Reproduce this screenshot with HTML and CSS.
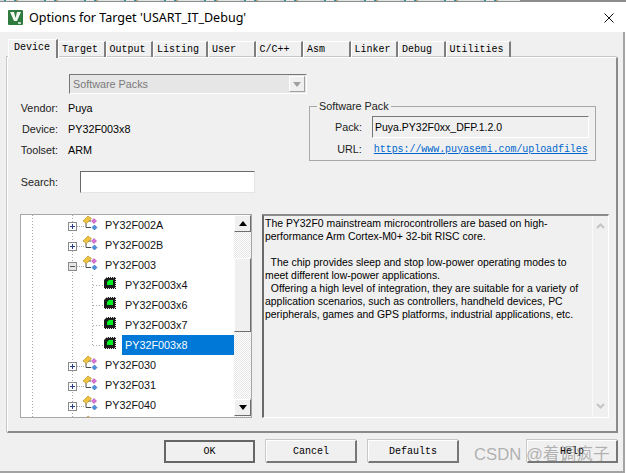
FILE: index.html
```html
<!DOCTYPE html>
<html>
<head>
    <meta charset="utf-8">
    <link rel="stylesheet" href="styles.css">
</head>
<body>
    <svg class="defs" width="0" height="0">
        <symbol id="group" viewBox="0 0 32 20">
            <path d="M18 8V12.500H23M20 6H23" fill="none" stroke="#4a4a4a"/>
            <path d="M15 6L20 1L23.500 3.500L18.500 8.500Z" fill="#efc240" stroke="#b08a20" stroke-width=".6"/>
            <path d="M26 3.500L28.500 6L26 8.500L23.500 6Z" fill="#e070d8" stroke="#a04aa0" stroke-width=".6"/>
            <path d="M26.500 10L29 12.500L26.500 15L24 12.500Z" fill="#4f94e0" stroke="#2a62a8" stroke-width=".6"/>
        </symbol>
        <symbol id="chip" viewBox="0 0 30 20">
            <path d="M15 2H24V14H12V5Z" fill="#1c1c1c"/>
            <path d="M15 2.500H24M23.500 2V14M12 13.500H24" fill="none" stroke="#e8e8e8" stroke-dasharray="1 1"/>
            <path d="M17 5H21V10H15V7Z" fill="#00ee22"/>
        </symbol>
    </svg>

    <div class="window">
        <div class="top-edge"><div class="noise"></div></div>

        <div class="titlebar">
            <svg class="app-icon" width="15" height="15" viewBox="0 0 15 15">
                <rect width="15" height="15" rx="1" fill="#2f7a3f"/>
                <path d="M2 2H6L7.500 8L9 2H13L9 11H6Z" fill="#f2f6f0"/>
                <path d="M10 13H13" stroke="#fff" stroke-width="1.400"/>
            </svg>
            <span class="title">Options for Target 'USART_IT_Debug'</span>
            <svg class="close" width="10" height="10" viewBox="0 0 10 10">
                <path d="M.5 .5L9.500 9.500M9.500 .5L.5 9.500" stroke="#111" stroke-width="1"/>
            </svg>
        </div>

        <div class="body">
            <div class="tabs">
                <span class="tab active">Device</span>
                <span class="tab">Target</span>
                <span class="tab">Output</span>
                <span class="tab wide">Listing</span>
                <span class="tab">User</span>
                <span class="tab">C/C++</span>
                <span class="tab">Asm</span>
                <span class="tab">Linker</span>
                <span class="tab">Debug</span>
                <span class="tab">Utilities</span>
            </div>

            <div class="panel">
                <div class="combo">
                    <span>Software Packs</span>
                    <span class="combo-btn"><i class="arrow-down grey"></i></span>
                </div>

                <div class="info-row">
                    <div class="info-col">
                        <div class="field"><label>Vendor:</label><span>Puya</span></div>
                        <div class="field"><label>Device:</label><span>PY32F003x8</span></div>
                        <div class="field"><label>Toolset:</label><span>ARM</span></div>
                        <div class="search"><label>Search:</label><div class="search-box"></div></div>
                    </div>

                    <fieldset class="pack">
                        <legend>Software Pack</legend>
                        <div class="pack-row">
                            <label>Pack:</label>
                            <div class="pack-value">Puya.PY32F0xx_DFP.1.2.0</div>
                        </div>
                        <div class="pack-row">
                            <label>URL:</label>
                            <a class="pack-link" href="#">https://www.puyasemi.com/uploadfiles</a>
                        </div>
                    </fieldset>
                </div>

                <div class="lower-row">
                    <div class="tree">
                        <div class="tree-list">
                            <div class="node"><span class="exp plus"></span><svg class="ico"><use href="#group"/></svg><span class="name">PY32F002A</span></div>
                            <div class="node"><span class="exp plus"></span><svg class="ico"><use href="#group"/></svg><span class="name">PY32F002B</span></div>
                            <div class="node"><span class="exp minus"></span><svg class="ico"><use href="#group"/></svg><span class="name">PY32F003</span></div>
                            <div class="children">
                                <div class="leaf"><svg class="chip"><use href="#chip"/></svg><span class="leaf-name">PY32F003x4</span></div>
                                <div class="leaf"><svg class="chip"><use href="#chip"/></svg><span class="leaf-name">PY32F003x6</span></div>
                                <div class="leaf"><svg class="chip"><use href="#chip"/></svg><span class="leaf-name">PY32F003x7</span></div>
                                <div class="leaf"><svg class="chip"><use href="#chip"/></svg><span class="leaf-name selected">PY32F003x8</span></div>
                            </div>
                            <div class="node"><span class="exp plus"></span><svg class="ico"><use href="#group"/></svg><span class="name">PY32F030</span></div>
                            <div class="node"><span class="exp plus"></span><svg class="ico"><use href="#group"/></svg><span class="name">PY32F031</span></div>
                            <div class="node"><span class="exp plus"></span><svg class="ico"><use href="#group"/></svg><span class="name">PY32F040</span></div>
                            <div class="node"><svg class="ico"><use href="#group"/></svg></div>
                        </div>
                        <div class="scrollbar">
                            <div class="sb-btn"><i class="arrow-up"></i></div>
                            <div class="sb-thumb"></div>
                            <div class="sb-btn sb-end"><i class="arrow-down"></i></div>
                        </div>
                    </div>

                    <div class="desc">
                        <div class="desc-text">The PY32F0 mainstream microcontrollers are based on high-
performance Arm Cortex-M0+ 32-bit RISC core.

  The chip provides sleep and stop low-power operating modes to
meet different low-power applications.
  Offering a high level of integration, they are suitable for a variety of
application scenarios, such as controllers, handheld devices, PC
peripherals, games and GPS platforms, industrial applications, etc.</div>
                        <div class="desc-scroll">
                            <svg width="9" height="6" viewBox="0 0 9 6"><path d="M1 5L4.500 1.500L8 5" fill="none" stroke="#c4c4c4" stroke-width="2"/></svg>
                            <svg width="9" height="6" viewBox="0 0 9 6"><path d="M1 1L4.500 4.500L8 1" fill="none" stroke="#c4c4c4" stroke-width="2"/></svg>
                        </div>
                    </div>
                </div>
            </div>

            <div class="footer">
                <button class="btn default">OK</button>
                <button class="btn">Cancel</button>
                <button class="btn">Defaults</button>
                <button class="btn help">Help</button>
            </div>
        </div>

        <div class="watermark">CSDN @着调疯子</div>
    </div>
</body>
</html>
```

FILE: styles.css
```css
* {
    box-sizing: border-box;
}

html, body {
    margin: 0;
    padding: 0;
    background: #fff;
}

body {
    font-family: "Liberation Sans", Arial, sans-serif;
    font-size: 10.8px;
    color: #000;
}

.defs {
    position: absolute;
}

.window {
    position: relative;
    width: 626px;
    height: 473px;
    overflow: hidden;
    display: flex;
    flex-direction: column;
    background: #fff;
}

.top-edge {
    height: 2px;
    background: #8c8c8c;
    flex: none;
}

.noise {
    width: 520px;
    height: 1px;
    background: repeating-linear-gradient(90deg, #cfd6d6 0 4px, #2d8f9c 4px 6px, #e8e8e8 6px 14px, #2d8f9c 14px 16px, #b9a27c 16px 18px, #dfe5e5 18px 40px);
}

.titlebar {
    height: 30px;
    flex: none;
    display: flex;
    align-items: center;
    padding: 0 12px 0 8px;
    background: #fff;
}

.app-icon {
    flex: none;
}

.title {
    margin-left: 6px;
    font-family: "Noto Sans", sans-serif;
    font-size: 12.55px;
    white-space: nowrap;
}

.close {
    margin-left: auto;
    margin-top: 1px;
}

.body {
    flex: 1;
    background: #f0f0f0;
    padding: 7px 0 0 7px;
    border-right: 2px solid #a3a3a3;
    border-bottom: 2px solid #a3a3a3;
    margin-right: 1px;
}

/* tabs */
.tabs {
    display: flex;
    height: 18px;
    padding-left: 1px;
    align-items: flex-end;
    font-family: "Liberation Mono", monospace;
    font-size: 10px;
    position: relative;
    z-index: 1;
}

.tab {
    min-width: 47.5px;
    height: 16px;
    padding: 0 5px 0 3px;
    line-height: 16px;
    border-top: 1px solid #fff;
    border-left: 1px solid #fff;
    border-right: 2px solid #7e7e7e;
    white-space: pre;
}

.tab.wide {
    min-width: 55px;
}

.tab.active {
    min-width: 50px;
    height: 19px;
    margin-bottom: -1px;
    padding-left: 5px;
    line-height: 15px;
    background: #f0f0f0;
}

.panel {
    width: 611px;
    height: 376px;
    padding: 16px 0 0 12px;
    border-top: 1px solid #fff;
    border-left: 1px solid #fff;
    border-right: 2px solid #8a8a8a;
    border-bottom: 2px solid #8a8a8a;
    box-shadow: -1px -1px 0 #c8c8c8;
}

.combo {
    width: 238px;
    height: 20px;
    margin-left: 49px;
    padding-left: 3px;
    display: flex;
    align-items: center;
    justify-content: space-between;
    color: #7a7a7a;
    border-top: 1px solid #777;
    border-left: 1px solid #777;
    border-right: 1px solid #fff;
    border-bottom: 1px solid #fff;
    background: #e6e6e6;
}

.combo-btn {
    width: 16px;
    height: 16px;
    margin-right: 1px;
    display: flex;
    align-items: center;
    justify-content: center;
    background: #f0f0f0;
    border: 1px solid #fff;
    border-right-color: #a0a0a0;
    border-bottom-color: #a0a0a0;
}

.arrow-down, .arrow-up {
    display: block;
    width: 0;
    height: 0;
    border-left: 4px solid transparent;
    border-right: 4px solid transparent;
}

.arrow-down {
    border-top: 5px solid #000;
}

.arrow-up {
    border-bottom: 5px solid #000;
}

.arrow-down.grey {
    border-top-color: #a0a0a0;
}

.info-row {
    display: flex;
    margin-top: 3px;
    height: 96px;
}

.info-col {
    width: 289px;
    flex: none;
}

.field {
    display: flex;
    height: 21px;
    align-items: center;
}

.field label, .search label {
    width: 38px;
    text-align: right;
    color: #222;
}

.field span {
    margin-left: 10px;
}

.search {
    display: flex;
    align-items: center;
    margin-top: 11px;
    height: 22px;
}

.search-box {
    width: 175px;
    height: 22px;
    margin-left: 22px;
    background: #fff;
    border-top: 1px solid #6a6a6a;
    border-left: 1px solid #6a6a6a;
    border-right: 1px solid #e4e4e4;
    border-bottom: 1px solid #e4e4e4;
}

.pack {
    width: 287px;
    height: 62px;
    margin: 2px 0 0;
    padding: 3px 6px 0 0;
    border: 1px solid #a8a8a8;
    min-width: 0;
}

.pack legend {
    margin-left: 7px;
    padding: 0 2px 0 2px;
    line-height: 14px;
    color: #222;
}

.pack-row {
    display: flex;
    align-items: center;
    height: 22px;
}

.pack-row label {
    width: 52px;
    text-align: right;
    color: #222;
}

.pack-value {
    width: 217px;
    height: 22px;
    margin-left: 10px;
    padding-left: 2px;
    font-size: 10.5px;
    line-height: 20px;
    border-top: 1px solid #777;
    border-left: 1px solid #777;
    border-right: 1px solid #fff;
    border-bottom: 1px solid #fff;
}

.pack-link {
    width: 216px;
    margin-left: 12px;
    font-family: "Liberation Mono", monospace;
    font-size: 10px;
    letter-spacing: -0.06px;
    color: #0066cc;
    white-space: nowrap;
}

/* device tree and description */
.lower-row {
    display: flex;
    gap: 10px;
    margin-top: 21px;
}

.tree {
    width: 232px;
    height: 204px;
    display: flex;
    background: #fff;
    border: 1px solid #a6a6a6;
}

.tree-list {
    width: 213px;
    flex: none;
    overflow: hidden;
    background-image:
        repeating-linear-gradient(180deg, #a8a8a8 0 1px, transparent 1px 3px),
        repeating-linear-gradient(180deg, #a8a8a8 0 1px, transparent 1px 3px);
    background-size: 1px 100%, 1px 100%;
    background-position: 11px 0, 51px 0;
    background-repeat: no-repeat;
}

.node {
    position: relative;
    height: 20px;
    display: flex;
    padding-left: 62px;
    line-height: 20px;
}

.exp {
    position: absolute;
    left: 47px;
    top: 7px;
    width: 9px;
    height: 9px;
    border: 1px solid #8a8a8a;
    background: #fff;
}

.exp::after {
    content: "";
    position: absolute;
    left: 8px;
    top: 3px;
    width: 7px;
    height: 1px;
    background: repeating-linear-gradient(90deg, #a8a8a8 0 1px, transparent 1px 2px);
}

.plus {
    background:
        linear-gradient(#2a3f90, #2a3f90) center / 5px 1px no-repeat,
        linear-gradient(#2a3f90, #2a3f90) center / 1px 5px no-repeat,
        #fff;
}

.minus {
    background:
        linear-gradient(#555, #555) center / 5px 1px no-repeat,
        #e6e6e6;
}

.ico {
    width: 32px;
    height: 20px;
    flex: none;
    margin-left: -15px;
    margin-right: 5px;
}

.name {
    color: #111;
}

.children {
    height: 80px;
    padding-left: 71px;
    background-image: repeating-linear-gradient(180deg, #a8a8a8 0 1px, transparent 1px 3px);
    background-size: 1px 70px;
    background-position: 71px 0;
    background-repeat: no-repeat;
}

.leaf {
    height: 20px;
    display: flex;
    line-height: 20px;
}

.chip {
    width: 30px;
    height: 20px;
    flex: none;
    background: repeating-linear-gradient(90deg, #a8a8a8 0 1px, transparent 1px 3px) 1px 10px / 11px 1px no-repeat;
}

.leaf-name {
    flex: 1;
    padding-left: 3px;
    color: #111;
}

.selected {
    background: #0078d7;
    color: #fff;
}

.scrollbar {
    width: 17px;
    flex: none;
    display: flex;
    flex-direction: column;
    background: repeating-conic-gradient(#e6e6e6 0 25%, #fff 0 50%) 0 0 / 2px 2px;
}

.sb-btn {
    height: 17px;
    flex: none;
    display: flex;
    align-items: center;
    justify-content: center;
    background: #f0f0f0;
    border: 1px solid #fff;
    border-right-color: #6e6e6e;
    border-bottom-color: #6e6e6e;
}

.sb-thumb {
    height: 74px;
    margin-top: 26px;
    background: #f0f0f0;
    border: 1px solid #fff;
    border-right-color: #6e6e6e;
    border-bottom-color: #6e6e6e;
}

.sb-end {
    margin-top: auto;
    margin-bottom: 1px;
}

.desc {
    width: 347px;
    height: 204px;
    display: flex;
    border-top: 2px solid #8a8a8a;
    border-left: 2px solid #6a6a6a;
    border-right: 1px solid #fff;
    border-bottom: 1px solid #fff;
}

.desc-text {
    flex: 1;
    padding: 1px 0 0 1px;
    font-size: 10.45px;
    line-height: 13px;
    white-space: pre;
    overflow: hidden;
}

.desc-scroll {
    width: 16px;
    flex: none;
    display: flex;
    flex-direction: column;
    justify-content: space-between;
    align-items: center;
    padding: 7px 0 8px;
    border-left: 1px solid #fafafa;
}

/* bottom buttons */
.footer {
    display: flex;
    gap: 11px;
    padding: 7px 0 0 157px;
    width: 611px;
}

.btn {
    width: 91px;
    height: 23px;
    padding: 0;
    font-family: "Liberation Mono", monospace;
    font-size: 10px;
    color: #000;
    background: #f0f0f0;
    border: 1px solid #fff;
    border-right: 2px solid #777;
    border-bottom: 2px solid #777;
    box-shadow: -1px -1px 0 #c8c8c8;
}

.btn.default {
    border: 2px solid #666;
    box-shadow: none;
}

.btn.help {
    margin-left: auto;
}

.watermark {
    position: absolute;
    left: 474px;
    top: 445px;
    font-family: "Liberation Sans", "Noto Sans CJK SC", sans-serif;
    font-size: 16.7px;
    line-height: 20px;
    color: rgba(120, 120, 120, 0.55);
    white-space: nowrap;
}
```
